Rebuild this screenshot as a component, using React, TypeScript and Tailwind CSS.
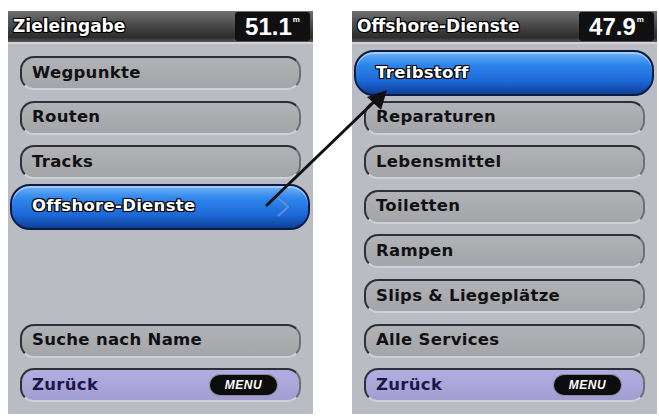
import React from 'react';

type Row = { label?: string; kind?: 'plain' | 'active' | 'back' | 'empty'; chevron?: boolean };

const leftRows: Row[] = [
	{ label: 'Wegpunkte' },
	{ label: 'Routen' },
	{ label: 'Tracks' },
	{ label: 'Offshore-Dienste', kind: 'active', chevron: true },
	{ kind: 'empty' },
	{ kind: 'empty' },
	{ label: 'Suche nach Name' },
	{ label: 'Zurück', kind: 'back' },
];

const rightRows: Row[] = [
	{ label: 'Treibstoff', kind: 'active' },
	{ label: 'Reparaturen' },
	{ label: 'Lebensmittel' },
	{ label: 'Toiletten' },
	{ label: 'Rampen' },
	{ label: 'Slips & Liegeplätze' },
	{ label: 'Alle Services' },
	{ label: 'Zurück', kind: 'back' },
];

const font = "font-['DejaVu_Sans',Verdana,sans-serif]";
const outline = '[text-shadow:0_0_2px_#000,1px_1px_0_#000,-1px_-1px_0_#000,1px_-1px_0_#000,-1px_1px_0_#000]';

function MenuPill() {
	return (
		<div className="w-[67px] h-[20px] rounded-full bg-[#0c0c0e] ring-1 ring-[#8c8c94] flex items-center justify-center">
			<span className="font-['Liberation_Sans',Arial,sans-serif] text-[12px] font-bold italic text-white tracking-[0.5px]">
				MENU
			</span>
		</div>
	);
}

function MenuRow({ row }: { row: Row }) {
	const kind = row.kind ?? 'plain';
	if (kind === 'empty') return <div className="h-[34px]" />;

	if (kind === 'active') {
		return (
			<div className="ml-[2px] mr-[3px] -my-[6px] h-[46px] rounded-[20px] border-2 border-[#0d1a45] bg-[linear-gradient(#6fb0f5_0%,#2f86ec_30%,#1c68d6_70%,#0f3f98_100%)] shadow-[inset_0_2px_0_#9fcaf7] flex items-center justify-between pl-[20px] pr-[18px]">
				<span className={`${font} text-[16.5px] font-bold tracking-[0.3px] text-white ${outline}`}>
					{row.label}
				</span>
				{row.chevron && (
					<svg width="14" height="22" viewBox="0 0 14 22" fill="none">
						<polyline points="2,2 12,11 2,20" stroke="#5d8fd8" strokeWidth="2" />
					</svg>
				)}
			</div>
		);
	}

	const isBack = kind === 'back';
	return (
		<div
			className={`h-[34px] mx-[12px] rounded-[14px] border-2 border-t-[#2f3038] border-l-[#2f3038] border-r-[#6e7078] border-b-[#cfd1d6] flex items-center justify-between pl-[10px] pr-[22px] ${
				isBack
					? 'bg-[linear-gradient(#b2aee0,#a29ed3)]'
					: 'bg-[linear-gradient(#b0b2b6,#a3a5a9)]'
			}`}
		>
			<span
				className={`${font} text-[16.5px] font-bold tracking-[0.3px] ${
					isBack ? 'text-[#1c1748]' : 'text-[#111114]'
				}`}
			>
				{row.label}
			</span>
			{isBack && <MenuPill />}
		</div>
	);
}

function Screen({ title, depth, rows }: { title: string; depth: string; rows: Row[] }) {
	return (
		<div className="w-[305px] h-[403px] bg-[#b9bcc3] flex flex-col">
			<div className="h-[33px] bg-[linear-gradient(#707070,#4a4a4a_45%,#2c2c2c_85%,#555)] border-b-2 border-[#d2d4d9] flex items-center justify-between pl-[5px] pr-[3px]">
				<span className={`${font} text-[17px] font-bold text-white ${outline}`}>{title}</span>
				<div className="h-[29px] w-[75px] rounded-[3px] bg-[#101012] flex items-start justify-center pt-[1px]">
					<span className="font-['Liberation_Sans',Arial,sans-serif] text-[24px] leading-[28px] font-bold text-white">
						{depth}
					</span>
					<span className="font-['Liberation_Sans',Arial,sans-serif] text-[8px] leading-[14px] font-bold text-white ml-[1px]">
						m
					</span>
				</div>
			</div>
			<div className="flex flex-col gap-[10.6px] pt-[12px]">
				{rows.map((row, i) => (
					<MenuRow key={i} row={row} />
				))}
			</div>
		</div>
	);
}

export default function App() {
	return (
		<div className="relative w-[659px] h-[417px] bg-white overflow-hidden">
			<div className="flex gap-[39px] pl-[8px] pt-[11px]">
				<Screen title="Zieleingabe" depth="51.1" rows={leftRows} />
				<Screen title="Offshore-Dienste" depth="47.9" rows={rightRows} />
			</div>
			{/* pointer from the selected entry to the submenu */}
			<svg className="absolute inset-0 pointer-events-none" width="659" height="417">
				<line x1="267" y1="205" x2="376" y2="100" stroke="#111" strokeWidth="3" strokeLinecap="round" />
				<polygon points="387,90 367,97 381,110" fill="#111" />
			</svg>
		</div>
	);
}
